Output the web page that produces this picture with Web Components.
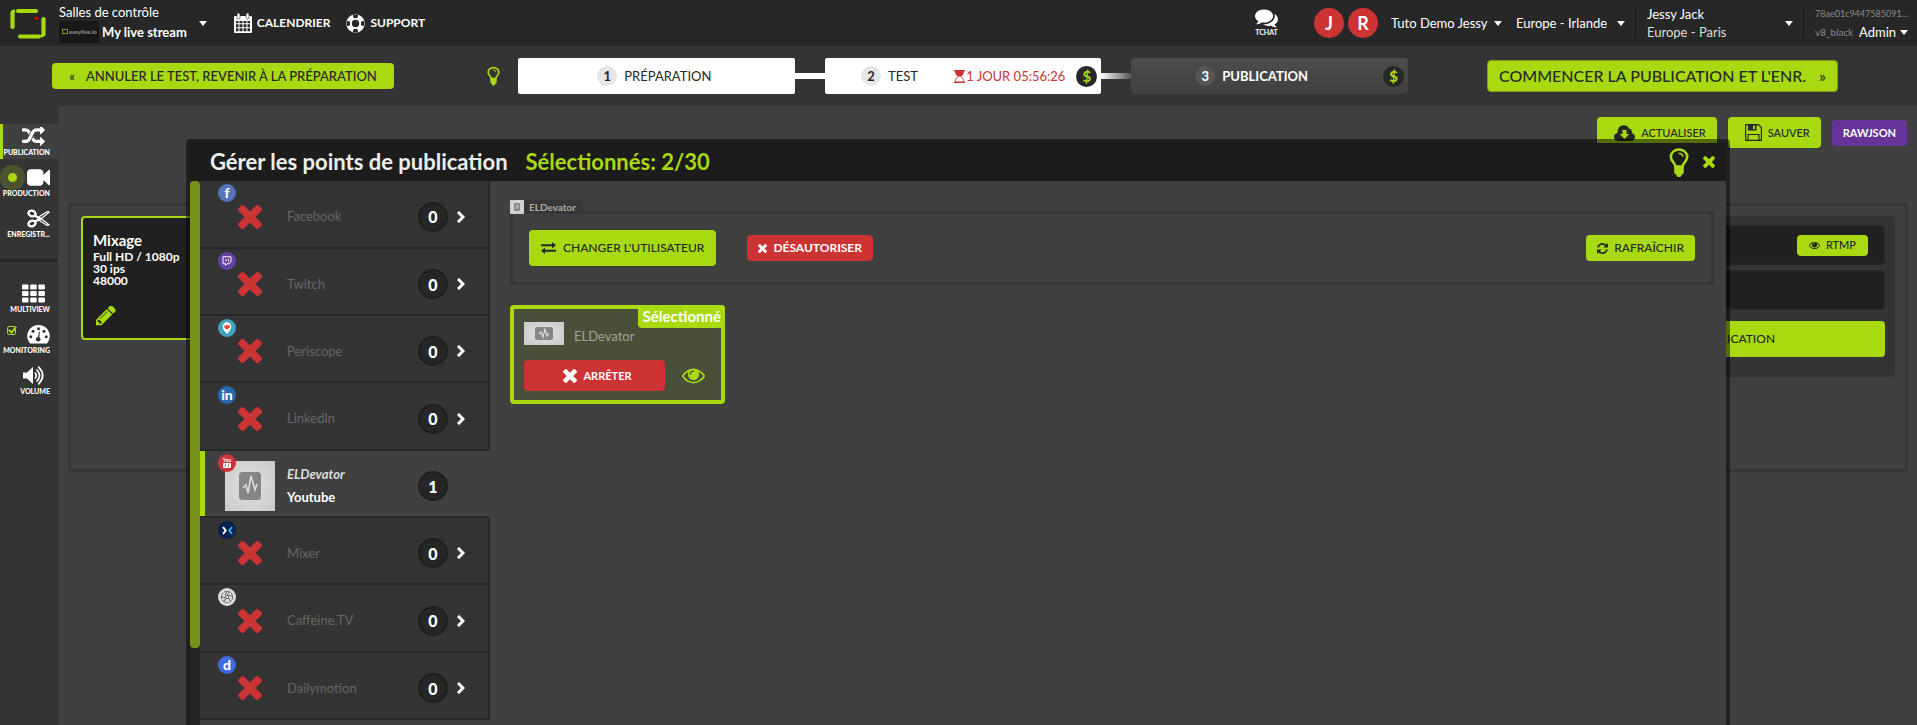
<!DOCTYPE html>
<html lang="fr">
<head>
<meta charset="utf-8">
<meta name="viewport" content="width=device-width, initial-scale=1">
<title>Gérer les points de publication</title>
<style>
:root {
  --green: #a8d911;
  --red: #cc3333;
  --bar: #272727;
  --panel: #343434;
  --page: #404040;
  --ink: #272727;
}

* { box-sizing: border-box; }

body {
  margin: 0;
  min-height: 100vh;
  overflow: hidden;
  display: flex;
  flex-direction: column;
  position: relative;
  background: var(--page);
  color: #fff;
  font: 13px/18px Lato, "Open Sans", sans-serif;
}

.main {
  flex: 1;
  display: flex;
}
</style>
</head>
<body>

<template id="ui-button">
<style>
:host { display: inline-flex; }
button {
  flex: 1;
  display: flex;
  align-items: center;
  justify-content: center;
  gap: 6px;
  height: 26px;
  padding: 0 11px;
  border: 0;
  border-radius: 4px;
  background: var(--green);
  color: var(--ink);
  font: 500 12px/16px Lato, sans-serif;
  white-space: nowrap;
  cursor: pointer;
}
:host([size="small"]) button { height: 21px; padding: 0 12px; font-size: 11px; }
:host([size="medium"]) button { height: 31px; padding: 0 11px 0 17px; font-size: 11px; }
:host([size="large"]) button { height: 36px; padding: 0 12px; gap: 7px; }
:host([size="step"]) button { font-size: 13px; gap: 11px; padding: 0 17px; }
:host([size="hero"]) button { height: 32px; font-size: 16px; gap: 13px; border: 1px solid #7d9c22; }
:host([variant="red"]) button { background: var(--red); color: #fff; font-weight: 700; }
:host([variant="purple"]) button { background: #663399; color: #fff; font-size: 11px; font-weight: 700; }
</style>
<button type="button"><slot></slot></button>
</template>

<template id="top-bar">
<style>
:host {
  display: flex;
  align-items: center;
  height: 46px;
  padding: 0 9px 0 10px;
  background: var(--bar);
}
* { box-sizing: border-box; }
button, select {
  border: 0;
  padding: 0;
  background: none;
  color: inherit;
  font: inherit;
  text-align: left;
  cursor: pointer;
}
select { appearance: none; }
a { color: #fff; text-decoration: none; font-size: 12px; font-weight: 700; }
.logo { display: flex; margin-right: 13px; }
.room { display: flex; align-items: center; gap: 12px; margin-right: 27px; }
.room-text { display: grid; }
.room-name { display: flex; align-items: center; gap: 3px; font-weight: 700; }
.room-name svg { background: #181818; }
.link { display: flex; align-items: center; gap: 5px; margin-right: 16px; }
.chat { display: grid; justify-items: center; margin-left: auto; margin-right: 36px; font-size: 7px; line-height: 9px; }
.avatar {
  display: grid;
  place-items: center;
  width: 30px;
  height: 30px;
  margin-right: 4px;
  border-radius: 50%;
  background: var(--red);
  font-size: 18px;
  font-weight: 700;
}
.pick { display: flex; align-items: center; gap: 6px; }
.studio { margin: 0 14px 0 9px; }
.zone { gap: 9px; padding-right: 10px; }
.caret {
  border: 4px solid transparent;
  border-top: 5px solid #fff;
  border-bottom: 0;
}
.user {
  display: flex;
  align-items: center;
  justify-content: space-between;
  width: 169px;
  height: 32px;
  padding: 0 10px 0 11px;
  border: solid #151515;
  border-width: 0 1px;
}
.user small { display: block; font-size: 13px; color: #ddd; }
.account { width: 104px; padding-left: 11px; white-space: nowrap; }
.account div { font-size: 9px; color: #8a8a8a; }
.account .row { display: flex; align-items: center; gap: 3px; font-size: 10px; }
.account .row span { flex: 1; }
.account select { color: #fff; font-size: 13px; }
</style>
<a class="logo" href="#" aria-label="Accueil">
  <svg width="36" height="31" viewBox="0 0 36 31" fill="none" stroke="#a8d911" stroke-width="4.200" stroke-linecap="round" stroke-linejoin="round">
    <path d="M8 3h18M10 28.500h19M2.500 4.500V19M33.500 11v15.500"/>
    <path d="M3.300 3h.5M32 27.800h.4" stroke-width="3"/>
    <circle cx="26.500" cy="10.300" r="1.700" fill="#e00" stroke="none"/>
  </svg>
</a>
<button class="room" type="button">
  <span class="room-text">
    <span>Salles de contrôle</span>
    <span class="room-name">
      <svg width="40" height="22" viewBox="0 0 40 22"><rect x="3.500" y="8.500" width="5" height="4" fill="none" stroke="#7d9c22"/><text x="10" y="13" font-size="6" fill="#999" font-family="Lato">easylive.io</text></svg>
      My live stream
    </span>
  </span>
  <i class="caret"></i>
</button>
<a class="link" href="#"><ui-icon name="calendar" w="18" h="20"></ui-icon>CALENDRIER</a>
<a class="link" href="#"><ui-icon name="ring" w="19" h="19"></ui-icon>SUPPORT</a>
<a class="chat" href="#"><ui-icon name="comments" w="23" h="19"></ui-icon>TCHAT</a>
<span class="avatar">J</span>
<span class="avatar">R</span>
<span class="pick studio"><select aria-label="Studio"><option>Tuto Demo Jessy</option></select><i class="caret"></i></span>
<span class="pick zone"><select aria-label="Région"><option>Europe - Irlande</option></select><i class="caret"></i></span>
<button class="user" type="button"><span>Jessy Jack<small>Europe - Paris</small></span><i class="caret"></i></button>
<div class="account">
  <div>78ae01c9447585091...</div>
  <div class="row"><span>v8_black</span><select aria-label="Rôle"><option>Admin</option></select><i class="caret"></i></div>
</div>
</template>

<template id="wizard-step">
<style>
:host {
  flex: 1;
  display: flex;
  align-items: center;
  height: 36px;
  padding-right: 4px;
  border-radius: 2px;
  background: #fff;
  color: var(--ink);
}
:host([next]) {
  border-radius: 4px;
  background: linear-gradient(#4c4c4c, #404040);
  color: #fff;
  font-weight: 700;
}
.title { flex: 1; display: flex; align-items: center; justify-content: center; gap: 7px; }
.num {
  display: grid;
  place-items: center;
  width: 20px;
  height: 20px;
  border-radius: 50%;
  background: #e6e6e6;
  font-weight: 700;
}
:host([next]) .num { background: #555; }
::slotted(b) {
  display: grid;
  place-items: center;
  width: 21px;
  height: 21px;
  margin-left: 11px;
  border-radius: 50%;
  background: var(--ink);
  color: var(--green);
  font-size: 15px;
}
::slotted(time) { display: flex; align-items: center; gap: 1px; color: var(--red); }
</style>
<span class="title"><span class="num"></span><slot></slot></span>
<slot name="extra"></slot>
</template>

<template id="step-bar">
<style>
:host {
  display: grid;
  grid-template-columns: 446fr 962fr 509fr;
  align-items: center;
  justify-items: center;
  height: 60px;
  background: var(--panel);
}
.steps { display: flex; align-items: center; justify-self: stretch; }
.tip { box-sizing: border-box; width: 72px; padding-left: 41px; display: flex; }
.line { width: 30px; height: 6px; background: #fff; }
.line.fade { background: linear-gradient(90deg, #fff, #555); }
</style>
<ui-button size="step"><span>«</span> ANNULER LE TEST, REVENIR À LA PRÉPARATION</ui-button>
<div class="steps">
  <span class="tip"><ui-icon name="bulb" w="13" h="20" style="color: var(--green)"></ui-icon></span>
  <wizard-step num="1">PRÉPARATION</wizard-step>
  <i class="line"></i>
  <wizard-step num="2">TEST<time slot="extra"><ui-icon name="hourglass" w="11" h="13"></ui-icon>1 JOUR 05:56:26</time><b slot="extra">$</b></wizard-step>
  <i class="line fade"></i>
  <wizard-step num="3" next>PUBLICATION<b slot="extra">$</b></wizard-step>
</div>
<ui-button size="hero">COMMENCER LA PUBLICATION ET L'ENR. <span>»</span></ui-button>
</template>

<template id="nav-item">
<style>
:host { display: block; height: 35px; margin-bottom: 6px; }
:host([active]) { background: var(--page); box-shadow: inset 3px 0 var(--green); }
a { display: block; padding: 2px 8px 0 0; color: #fff; text-decoration: none; }
.icon { display: flex; align-items: center; justify-content: flex-end; height: 20px; padding: 0 5px; }
:host([wide]) .icon { padding-right: 0; }
.label {
  display: block;
  white-space: nowrap;
  text-align: right;
  font-size: 7px;
  line-height: 12px;
  font-weight: 900;
}
::slotted(*) { margin-right: auto; }
</style>
<a href="#"><span class="icon"><slot name="mark"></slot><ui-icon w="23" h="19"></ui-icon></span><span class="label"><slot></slot></span></a>
</template>

<template id="side-nav">
<style>
:host { display: block; width: 58px; padding-top: 18px; background: var(--panel); }
hr { height: 3px; margin: 18px 0 19px; border: 0; background: var(--bar); }
.live {
  width: 9px;
  height: 9px;
  margin-left: 3px;
  border-radius: 50%;
  background: var(--green);
  box-shadow: 0 0 0 8px rgba(168, 217, 17, .2);
}
input {
  appearance: none;
  width: 9px;
  height: 9px;
  margin: 0 auto 8px 2px;
  border: 1px solid var(--green);
  border-radius: 2px;
  position: relative;
}
input:checked::after {
  content: "";
  position: absolute;
  left: 2px;
  top: -2px;
  width: 3px;
  height: 6px;
  border: solid var(--green);
  border-width: 0 2px 2px 0;
  transform: rotate(40deg);
}
</style>
<nav>
  <nav-item icon="random" active>PUBLICATION</nav-item>
  <nav-item icon="video" wide><i class="live" slot="mark"></i>PRODUCTION</nav-item>
  <nav-item icon="scissors" wide>ENREGISTR...</nav-item>
  <hr>
  <nav-item icon="grid">MULTIVIEW</nav-item>
  <nav-item icon="gauge" wide><input slot="mark" type="checkbox" checked aria-label="Monitoring">MONITORING</nav-item>
  <nav-item icon="volume">VOLUME</nav-item>
</nav>
</template>

<template id="work-area">
<style>
:host { flex: 1; display: block; padding: 11px 9px 0 10px; }
* { box-sizing: border-box; }
.actions { display: flex; align-items: center; justify-content: flex-end; gap: 11px; height: 31px; margin-bottom: 55px; padding-right: 1px; }
.board {
  display: flex;
  justify-content: space-between;
  align-items: flex-start;
  height: 269px;
  padding: 10px;
  border: 3px solid #363636;
  border-radius: 4px;
}
.mix {
  width: 200px;
  height: 124px;
  padding: 13px 10px;
  border: 2px solid var(--green);
  border-radius: 4px;
  background: #202020;
  font-size: 12px;
  font-weight: 700;
  line-height: 12px;
}
.mix h3 { margin: 0 0 2px; font-size: 15px; line-height: 18px; }
.mix p { margin: 0 0 19px; }
.mix ui-icon { padding-left: 3px; color: var(--green); }
.outputs { width: 318px; height: 161px; padding: 9px 10px; border-radius: 4px; background: var(--panel); }
.row {
  display: flex;
  align-items: center;
  justify-content: flex-end;
  height: 40px;
  margin-bottom: 5px;
  padding-right: 15px;
  border: 2px solid #262626;
  border-radius: 4px;
  background: #202020;
}
.outputs > ui-button { display: flex; margin-top: 11px; }
</style>
<div class="actions">
  <ui-button size="medium"><ui-icon name="cloud" w="21" h="16"></ui-icon>ACTUALISER</ui-button>
  <ui-button size="medium"><ui-icon name="floppy" w="17" h="17"></ui-icon>SAUVER</ui-button>
  <ui-button variant="purple">RAWJSON</ui-button>
</div>
<div class="board">
  <div class="mix">
    <h3>Mixage</h3>
    <p>Full HD / 1080p<br>30 ips<br>48000</p>
    <ui-icon name="pencil" w="20" h="20"></ui-icon>
  </div>
  <div class="outputs">
    <div class="row"><ui-button size="small"><ui-icon name="eye" w="11" h="9"></ui-icon>RTMP</ui-button></div>
    <div class="row"></div>
    <ui-button size="large">PUBLICATION</ui-button>
  </div>
</div>
</template>

<template id="platform-item">
<style>
* { box-sizing: border-box; }
:host {
  display: block;
  height: 67px;
  border: solid var(--bar);
  border-width: 0 2px 2px 0;
  background: var(--panel);
  color: #666;
}
:host([active]) { border-right-color: var(--page); background: var(--page); color: #fff; box-shadow: inset 5px 0 var(--green); }
button {
  display: flex;
  align-items: center;
  width: 100%;
  height: 100%;
  padding: 5px 23px 0 18px;
  position: relative;
  border: 0;
  background: none;
  color: inherit;
  font: 13px/23px Lato, sans-serif;
  text-align: left;
}
.badge {
  position: absolute;
  left: 18px;
  top: 3px;
  display: grid;
  place-items: center;
  width: 18px;
  height: 18px;
  border-radius: 50%;
  color: #fff;
  font-size: 14px;
  line-height: 18px;
  font-weight: 900;
}
.badge svg { display: block; }
.pic { display: grid; place-items: center; width: 50px; height: 50px; margin: 0 12px 0 7px; color: var(--red); }
.name { flex: 1; }
:host([active]) .name { font-weight: 700; }
.name em { display: block; color: #ddd; }
.count {
  display: grid;
  place-items: center;
  width: 30px;
  height: 30px;
  border: 2px solid #1f1f1f;
  border-radius: 50%;
  background: #262626;
  color: #fff;
  font-size: 16px;
  font-weight: 900;
}
.go { width: 17px; padding-left: 9px; color: #fff; display: flex; }
</style>
<button type="button">
  <span class="badge"></span>
  <span class="pic"></span>
  <span class="name"></span>
  <span class="count"></span>
  <span class="go"></span>
</button>
</template>

<template id="channel-card">
<style>
* { box-sizing: border-box; }
:host {
  display: block;
  position: relative;
  width: 215px;
  height: 99px;
  padding: 13px 10px 0;
  border: 4px solid var(--green);
  border-radius: 4px;
  background: #4a4f3a;
}
.tag {
  position: absolute;
  top: -4px;
  right: -4px;
  height: 23px;
  padding: 0 4px 0 5px;
  border-radius: 0 4px 0 4px;
  background: var(--green);
  font-size: 15px;
  line-height: 22px;
  font-weight: 700;
}
.who { display: flex; align-items: center; gap: 10px; height: 23px; margin-bottom: 15px; color: #a3a59c; }
.who span { padding-top: 5px; }
.foot { display: flex; align-items: center; gap: 17px; }
.foot ui-button { width: 141px; }
.eye { display: flex; padding: 0; border: 0; background: none; color: var(--green); }
</style>
<span class="tag">Sélectionné</span>
<div class="who"><ui-icon name="wave-wide" w="40" h="23"></ui-icon><span><slot></slot></span></div>
<div class="foot">
  <ui-button size="medium" variant="red"><ui-icon name="times" w="14" h="14"></ui-icon>ARRÊTER</ui-button>
  <button class="eye" type="button" aria-label="Voir"><ui-icon name="eye" w="23" h="16"></ui-icon></button>
</div>
</template>

<template id="publish-dialog">
<style>
* { box-sizing: border-box; }
:host {
  position: absolute;
  inset: 139px 187px 0 186px;
  display: flex;
  flex-direction: column;
  overflow: hidden;
  border: 4px solid rgba(0, 0, 0, .5);
  border-bottom: 0;
  border-radius: 4px 4px 0 0;
  background: var(--page);
  background-clip: padding-box;
}
header { display: flex; align-items: center; gap: 18px; height: 38px; padding: 0 11px 0 20px; background: #1c1c1c; }
h2 { margin: 0; font-size: 22px; line-height: 26px; color: #eee; }
h2.count { flex: 1; color: var(--green); }
header button { display: flex; padding: 0; border: 0; background: none; color: var(--green); }
header button + button { margin-left: -4px; }
.body { flex: 1; min-height: 0; display: flex; }
.scroll { width: 10px; background: #242424; }
.thumb { height: 467px; border-radius: 4px; background: #74921a; }
.list { width: 290px; overflow: hidden; }
.list platform-item:nth-child(3n + 1) { height: 68px; }
.pane { flex: 1; padding: 19px 12px 0 20px; }
.tab { display: flex; width: 73px; height: 14px; background: #373737; color: #aaa; font-size: 10px; line-height: 14px; font-weight: 700; gap: 5px; margin-bottom: -3px; }
.tools { display: flex; align-items: center; height: 74px; margin-bottom: 20px; padding: 0 16px; border: 3px solid #363636; }
.tools > :nth-child(2) { margin-left: 31px; margin-right: auto; }
</style>
<header>
  <h2>Gérer les points de publication</h2>
  <h2 class="count">Sélectionnés: 2/30</h2>
  <button type="button" aria-label="Aide"><ui-icon name="bulb" w="20" h="29"></ui-icon></button>
  <button type="button" aria-label="Fermer"><ui-icon name="times" w="12" h="12"></ui-icon></button>
</header>
<div class="body">
  <div class="scroll"><div class="thumb"></div></div>
  <div class="list"></div>
  <div class="pane">
    <div class="tab"><ui-icon name="wave" w="14" h="14"></ui-icon>ELDevator</div>
    <div class="tools">
      <ui-button size="large"><ui-icon name="exchange" w="15" h="12"></ui-icon>CHANGER L'UTILISATEUR</ui-button>
      <ui-button variant="red"><ui-icon name="times" w="9" h="9"></ui-icon>DÉSAUTORISER</ui-button>
      <ui-button><ui-icon name="refresh" w="11" h="11"></ui-icon>RAFRAÎCHIR</ui-button>
    </div>
    <channel-card>ELDevator</channel-card>
  </div>
</div>
</template>

<top-bar></top-bar>
<step-bar></step-bar>
<div class="main">
  <side-nav></side-nav>
  <work-area></work-area>
</div>
<publish-dialog></publish-dialog>

<script>
// name: [viewBox, markup]
const icons = {
  times: ['302 366 1188 1188', '<path d="M1490 1322q0 40-28 68l-136 136q-28 28-68 28t-68-28l-294-294-294 294q-28 28-68 28t-68-28l-136-136q-28-28-28-68t28-68l294-294-294-294q-28-28-28-68t28-68l136-136q28-28 68-28t68 28l294 294 294-294q28-28 68-28t68 28l136 136q28 28 28 68t-28 68l-294 294 294 294q28 28 28 68z"/>'],
  chevron: ['0 0 8 12', '<path d="M2 2l4 4-4 4" fill="none" stroke="currentColor" stroke-width="3" stroke-linecap="square"/>'],
  random: ['0 150 1792 1492', '<path d="M666 481q-60 92-137 273-22-45-37-72.500t-40.500-63.500-51-56.500-63-35-81.500-14.500h-224q-14 0-23-9t-9-23v-192q0-14 9-23t23-9h224q250 0 410 225zm1126 799q0 14-9 23l-320 320q-9 9-23 9-13 0-22.500-9.500t-9.500-22.500v-192q-32 0-85 .5t-81 1-73-1-71-5-64-10.500-63-18.500-58-28.500-59-40-55-53.500-56-69.500q59-93 136-273 22 45 37 72.500t40.500 63.500 51 56.500 63 35 81.500 14.500h256v-192q0-14 9-23t23-9q12 0 24 10l319 319q9 9 9 23zm0-896q0 14-9 23l-320 320q-9 9-23 9-13 0-22.500-9.500t-9.500-22.500v-192h-256q-48 0-87 15t-69 45-51 61.500-45 77.500q-32 62-78 171-29 66-49.500 111t-54 105-64 100-74 83-90 68.500-106.500 42-128 16.500h-224q-14 0-23-9t-9-23v-192q0-14 9-23t23-9h224q48 0 87-15t69-45 51-61.500 45-77.500q32-62 78-171 29-66 49.500-111t54-105 64-100 74-83 90-68.500 106.500-42 128-16.500h256v-192q0-14 9-23t23-9q12 0 24 10l319 319q9 9 9 23z"/>'],
  video: ['0 288 1792 1216', '<path d="M1792 352v1088q0 42-39 59-13 5-25 5-27 0-45-19l-403-403v166q0 119-84.500 203.500t-203.500 84.500h-704q-119 0-203.500-84.500t-84.500-203.500v-704q0-119 84.500-203.500t203.500-84.500h704q119 0 203.500 84.500t84.500 203.500v165l403-402q18-19 45-19 12 0 25 5 39 17 39 59z"/>'],
  scissors: ['0 0 23 18', '<g fill="none" stroke="currentColor"><ellipse cx="5" cy="4" rx="3.600" ry="2.700" transform="rotate(20 5 4)" stroke-width="2.400"/><ellipse cx="5" cy="14" rx="3.600" ry="2.700" transform="rotate(-20 5 14)" stroke-width="2.400"/><path d="M8 6l5 3.500L8 12" stroke-width="2.200"/><path d="M10.500 8.300L19.500 2.500q1.500-.6 2.600.2L12 11M10.500 9.700L19.500 15.500q1.500.6 2.600-.2L12 7.500" stroke-width="1.300"/></g>'],
  grid: ['0 0 23 18', '<rect width="6.500" height="5" rx="1"/><rect x="8.200" width="6.500" height="5" rx="1"/><rect x="16.400" width="6.500" height="5" rx="1"/><rect y="6.500" width="6.500" height="5" rx="1"/><rect x="8.200" y="6.500" width="6.500" height="5" rx="1"/><rect x="16.400" y="6.500" width="6.500" height="5" rx="1"/><rect y="13" width="6.500" height="5" rx="1"/><rect x="8.200" y="13" width="6.500" height="5" rx="1"/><rect x="16.400" y="13" width="6.500" height="5" rx="1"/>'],
  gauge: ['0 0 23 19', '<path d="M3 18.500Q.2 15 .2 11.300a11.300 11.300 0 0 1 22.600 0Q22.800 15 20 18.500z"/><g fill="#343434"><circle cx="3.800" cy="11.700" r="1.500"/><circle cx="6" cy="6.300" r="1.500"/><circle cx="11.500" cy="3.800" r="1.500"/><circle cx="17" cy="6.300" r="1.500"/><circle cx="19.200" cy="11.700" r="1.500"/><circle cx="11.200" cy="14.300" r="2.300"/><path d="M10.600 13.500l1.500-7 .9.200-.9 7z"/></g>'],
  volume: ['0 0 23 19', '<path d="M1 6.500h4L11 1v17l-6-5.500H1z"/><g fill="none" stroke="currentColor" stroke-width="1.700" stroke-linecap="round"><path d="M13.300 7q1.900 2.500 0 5M15 4q5 5.500 0 11M16.700 1.200q8 8.300 0 16.600"/></g>'],
  calendar: ['0 0 18 20', '<path fill-rule="evenodd" d="M1 3h16q1 0 1 1v15q0 1-1 1H1q-1 0-1-1V4q0-1 1-1zM2 8v2.200h2.500V8zm3.500 0v2.200h3V8zm4 0v2.200h3V8zm4 0v2.200H16V8zM2 11.200v3h2.500v-3zm3.500 0v3h3v-3zm4 0v3h3v-3zm4 0v3H16v-3zM2 15.200v3h2.500v-3zm3.500 0v3h3v-3zm4 0v3h3v-3zm4 0v3H16v-3z"/><rect x="3" y="0" width="3" height="6" rx="1.500" stroke="#272727" stroke-width=".6"/><rect x="12" y="0" width="3" height="6" rx="1.500" stroke="#272727" stroke-width=".6"/>'],
  ring: ['0 0 19 19', '<circle cx="9.500" cy="9.500" r="6.500" fill="none" stroke="currentColor" stroke-width="5.600"/><g fill="none" stroke="#272727" stroke-width="3.300"><path d="M7.300 2.600a7.200 7.200 0 0 1 4.400 0M7.300 16.400a7.200 7.200 0 0 0 4.400 0M2.600 7.300a7.200 7.200 0 0 0 0 4.400M16.400 7.300a7.200 7.200 0 0 1 0 4.400"/></g>'],
  comments: ['0 256 1792 1408', '<path d="M1408 768q0 139-94 257t-256.500 186.500-353.500 68.500q-86 0-176-16-124 88-278 128-36 9-86 16h-3q-11 0-20.500-8t-11.500-21q-1-3-1-6.500t.5-6.500 2-6l2.500-5 3.500-5.500 4-5 4.500-5 4-4.500q5-6 23-25t26-29.500 22.500-29 25-38.500 20.500-44q-124-72-195-177t-71-224q0-139 94-257t256.500-186.500 353.500-68.500 353.500 68.500 256.500 186.500 94 257zm384 256q0 120-71 224.500t-195 176.500q10 24 20.500 44t25 38.500 22.500 29 26 29.500 23 25q1 1 4 4.500t4.500 5 4 5 3.500 5.500l2.500 5 2 6 .5 6.500-1 6.500q-3 14-13 22t-22 7q-50-7-86-16-154-40-278-128-90 16-176 16-271 0-472-132 58 4 88 4 161 0 309-45t264-129q125-92 192-212t67-254q0-77-23-152 129 71 204 178t75 230z"/>'],
  bulb: ['0 0 20 29', '<path d="M6.500 18.500C6 14.500 1.800 13.500 1.800 8.800a8.200 7.300 0 0 1 16.400 0c0 4.700-4.200 5.700-4.700 9.700z" fill="none" stroke="currentColor" stroke-width="2.600"/><path d="M9.500 5.500q4-.4 4.500 3.300" fill="none" stroke="currentColor" stroke-width="1.500"/><path d="M5.200 18.500h9.600v6q0 1.500-1.800 2L11.500 29h-3L7 26.500q-1.800-.5-1.800-2z"/>'],
  hourglass: ['0 0 11 13', '<path d="M0 0h11v1.200H0zM0 11.800h11V13H0z"/><path d="M1.500 1v1.500q0 2.500 3 4-3 1.500-3 4V12h8v-1.500q0-2.500-3-4 3-1.500 3-4V1z" fill="none" stroke="currentColor" stroke-width=".8"/><path d="M1.500 1h8v1.500q0 2.500-3 4h-2q-3-1.500-3-4z"/>'],
  cloud: ['0 0 21 16', '<path fill-rule="evenodd" d="M4 16q-4-.4-4-4 0-3.200 3.500-4Q3.500.5 9.500.2q4 0 5.400 3.300 3.400.4 3 4.500Q21 9 21 12q-.3 3.700-4 4zM8.500 5v4H5.700l4.800 5 4.800-5h-2.800V5z"/>'],
  floppy: ['0 0 17 17', '<path d="M.6.6h12.800l3 3v12.800H.6z" fill="none" stroke="currentColor" stroke-width="1.200"/><path fill-rule="evenodd" d="M3 .5h8.500v6H3zM8 1.500v3.800h2V1.500z"/><path d="M3 16.500v-6h11v6" fill="none" stroke="currentColor" stroke-width="1.200"/>'],
  pencil: ['128 236 1536 1428', '<path d="M491 1536l91-91-235-235-91 91v107h128v128h107zm523-928q0-22-22-22-10 0-17 7l-542 542q-7 7-7 17 0 22 22 22 10 0 17-7l542-542q7-7 7-17zm-54-192l416 416-832 832h-416v-416zm683 96q0 53-37 90l-166 166-416-416 166-165q36-38 90-38 53 0 91 38l235 234q37 39 37 91z"/>'],
  eye: ['0 384 1792 1152', '<path d="M1664 960q-152-236-381-353 61 104 61 225 0 185-131.500 316.500t-316.500 131.500-316.500-131.500-131.500-316.500q0-121 61-225-229 117-381 353 133 205 333.500 326.500t434.500 121.500 434.500-121.500 333.500-326.500zm-720-384q0-20-14-34t-34-14q-125 0-214.500 89.500t-89.500 214.500q0 20 14 34t34 14 34-14 14-34q0-86 61-147t147-61q20 0 34-14t14-34zm848 384q0 34-20 69-140 230-376.500 368.500t-499.500 138.500-499.500-139-376.500-368q-20-35-20-69t20-69q140-229 376.500-368t499.500-139 499.500 139 376.500 368q20 35 20 69z"/>'],
  refresh: ['128 128 1536 1536', '<path d="M1639 1056q0 5-1 7-64 268-268 434.500t-478 166.500q-146 0-282.500-55t-243.500-157l-129 129q-19 19-45 19t-45-19-19-45v-448q0-26 19-45t45-19h448q26 0 45 19t19 45-19 45l-137 137q71 66 161 102t187 36q134 0 250-65t186-179q11-17 53-117 8-23 30-23h192q13 0 22.500 9.500t9.500 22.500zm25-800v448q0 26-19 45t-45 19h-448q-26 0-45-19t-19-45 19-45l138-138q-148-137-349-137-134 0-250 65t-186 179q-11 17-53 117-8 23-30 23h-199q-13 0-22.500-9.500t-9.500-22.500v-7q65-268 270-434.500t480-166.500q146 0 284 55.500t245 156.500l130-129q19-19 45-19t45 19 19 45z"/>'],
  exchange: ['0 0 15 12', '<path d="M0 2.300h11V0l4 3.300-4 3.200V4.300H0zM15 7.700H4V5.500L0 8.700 4 12V9.700h11z"/>'],
  wave: ['0 0 50 50', '<rect x="14" y="11" width="22" height="28" rx="3.500" fill="#868686"/><path d="M18 27l3-3 2 8 3-17 4 14 2-6" fill="none" stroke="#ddd" stroke-width="1.500"/>'],
  'wave-wide': ['0 0 40 23', '<rect x="11" y="5" width="18" height="13" rx="2.500" fill="#868686"/><path d="M15 12l2-2 2 5 2-8 2 7 2-3" fill="none" stroke="#ddd" stroke-width="1.200"/>']
};

const platforms = [
  { name: 'Facebook', color: '#5674b9', badge: 'f' },
  { name: 'Twitch', color: '#6441a4', badge: '<svg width="10" height="10" viewBox="0 0 10 10" fill="none" stroke="#fff"><path d="M1 .8h8v5L7 7.700H5L3.500 9.300V7.700H1z"/><path d="M4 3v2.500M6.500 3v2.500"/></svg>' },
  { name: 'Periscope', color: '#3fa4bd', badge: '<svg width="10" height="12" viewBox="0 0 10 12"><path d="M5 12Q.7 7.700.7 4.600a4.300 4.300 0 0 1 8.600 0Q9.300 7.700 5 12z" fill="#fff"/><path d="M5 2.200l1.500 1.500L7.700 3a2.900 2.900 0 1 1-5.300.3L3.600 4z" fill="#e8473e"/></svg>' },
  { name: 'LinkedIn', color: '#2867b2', badge: 'in' },
  { name: 'Youtube', user: 'ELDevator', count: 1, color: '#d0313a', badge: '<svg width="12" height="12" viewBox="0 0 12 12"><text x="6" y="5" text-anchor="middle" font-size="5" font-weight="700" fill="#fff">You</text><rect x="2" y="6" width="8" height="5" rx="1" fill="#fff"/><path d="M4.500 7.300v2.500M7.500 7.300v2.500" stroke="#d0313a" stroke-width=".8"/></svg>' },
  { name: 'Mixer', color: '#07204f', badge: '<svg width="11" height="9" viewBox="0 0 11 9" fill="none" stroke-width="2"><path d="M1 1l2.700 3.500L1 8" stroke="#fff"/><path d="M10 1L7.300 4.500 10 8" stroke="#1fbaed"/></svg>' },
  { name: 'Caffeine.TV', color: '#dedede', badge: '<svg width="14" height="14" viewBox="0 0 14 14" fill="none" stroke="#555" stroke-width=".9"><circle cx="7" cy="7" r="5.700" stroke-dasharray="3 .8"/><circle cx="7" cy="7" r="1.700"/><path d="M7 1.500L5 5M12.300 6L8.500 5.500M10.500 11.500L8.700 8M4 12l1.700-3.500M1.500 6.500L5.300 8M9.500 2L7 5"/></svg>' },
  { name: 'Dailymotion', color: '#4169e1', badge: 'd' }
];

class TemplateElement extends HTMLElement {
  constructor() {
    super();
    const template = document.getElementById(this.localName);
    this.attachShadow({ mode: 'open' }).appendChild(template.content.cloneNode(true));
  }

  find(selector) {
    return this.shadowRoot.querySelector(selector);
  }
}

class UiIcon extends HTMLElement {
  static observedAttributes = ['name'];

  constructor() {
    super();
    this.attachShadow({ mode: 'open' });
  }

  connectedCallback() {
    this.draw();
  }

  attributeChangedCallback() {
    this.draw();
  }

  draw() {
    const name = this.getAttribute('name');
    const icon = icons[name];
    if (!icon) return;
    this.shadowRoot.innerHTML = `
      <style>
        :host { display: inline-flex; flex: none; }
        svg { display: block; }
        .thumb { background: radial-gradient(#e2e2e2, #c9c9c9); }
      </style>
      <svg class="${name.startsWith('wave') ? 'thumb' : ''}" width="${this.getAttribute('w')}" height="${this.getAttribute('h')}"
           viewBox="${icon[0]}" fill="currentColor" aria-hidden="true">${icon[1]}</svg>`;
  }
}

class WizardStep extends TemplateElement {
  connectedCallback() {
    this.find('.num').textContent = this.getAttribute('num');
  }
}

class NavItem extends TemplateElement {
  connectedCallback() {
    this.find('ui-icon').setAttribute('name', this.getAttribute('icon'));
  }
}

class PlatformItem extends TemplateElement {
  set platform(item) {
    const badge = this.find('.badge');
    badge.innerHTML = item.badge;
    badge.style.background = item.color;
    this.toggleAttribute('active', !!item.user);

    if (item.user) {
      this.find('.pic').innerHTML = '<ui-icon name="wave" w="50" h="50"></ui-icon>';
      this.find('.name').innerHTML = `<em>${item.user}</em>${item.name}`;
    } else {
      this.find('.pic').innerHTML = '<ui-icon name="times" w="24" h="24"></ui-icon>';
      this.find('.name').textContent = item.name;
      this.find('.go').innerHTML = '<ui-icon name="chevron" w="8" h="12"></ui-icon>';
    }
    this.find('.count').textContent = item.count || 0;
  }
}

class PublishDialog extends TemplateElement {
  connectedCallback() {
    const list = this.find('.list');
    platforms.forEach((item) => {
      const el = document.createElement('platform-item');
      el.platform = item;
      list.appendChild(el);
    });
  }
}

customElements.define('ui-icon', UiIcon);
customElements.define('ui-button', class extends TemplateElement {});
customElements.define('wizard-step', WizardStep);
customElements.define('nav-item', NavItem);
customElements.define('platform-item', PlatformItem);
customElements.define('channel-card', class extends TemplateElement {});
customElements.define('top-bar', class extends TemplateElement {});
customElements.define('step-bar', class extends TemplateElement {});
customElements.define('side-nav', class extends TemplateElement {});
customElements.define('work-area', class extends TemplateElement {});
customElements.define('publish-dialog', PublishDialog);
</script>
</body>
</html>
